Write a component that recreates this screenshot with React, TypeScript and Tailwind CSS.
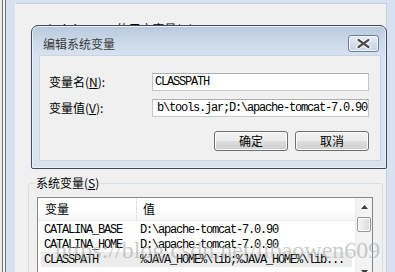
const cjk = "font-['Noto_Sans_CJK_SC',sans-serif]";
const mono = "font-['Liberation_Mono',monospace] text-[12px] tracking-[-1.2px]";

const rows = [
  { name: 'CATALINA_BASE', value: 'D:\\apache-tomcat-7.0.90', selected: false },
  { name: 'CATALINA_HOME', value: 'D:\\apache-tomcat-7.0.90', selected: false },
  { name: 'CLASSPATH', value: '%JAVA_HOME%\\lib;%JAVA_HOME%\\lib...', selected: true },
]

function WinButton({ label }: { label: string }) {
  return (
    <button className="w-[74px] h-[20px] rounded-[3px] border border-[#707070] bg-[linear-gradient(to_bottom,#f2f2f2,#ebebeb_50%,#dddddd_50%,#cfcfcf)] shadow-[inset_0_0_0_1px_#fbfbfb] text-[12px] leading-[14px] text-black flex items-center justify-center">
      {label}
    </button>
  )
}

export default function App() {
  return (
    <div className={`relative w-[395px] h-[272px] overflow-hidden bg-[#d6e2f0] flex text-black ${cjk}`}>
      {/* edge of the window behind */}
      <div className="w-[2px] bg-[#ececec]" />
      <div className="w-px bg-[#6f6f6f]" />
      <div className="w-[2px] bg-[#f7f7f7]" />
      <div className="w-px bg-[#6f6f6f]" />
      <div className="w-[9px]" />
      <div className="w-px mt-[3px] bg-[#eef3f9]" />

      {/* environment variables window client */}
      <div className="mt-[3px] w-[371px] bg-[#f0f0f0] border-t border-r border-[#c3cfdd] flex flex-col">
        <div className="mt-[18px] ml-[21px] text-[12px] leading-[14px] whitespace-nowrap">
          Administrator 的用户变量(<span className="underline">U</span>)
        </div>

        <div className="relative mt-[147px] ml-[12px] w-[355px] h-[120px] border border-[#d5dfe5] rounded-[3px] pt-[13px] pl-[8px]">
          <div className="absolute left-[6px] -top-[8px] px-[1px] bg-[#f0f0f0] text-[12px] leading-[14px]">
            系统变量(<span className="underline">S</span>)
          </div>

          <div className="w-[336px] h-[84px] border border-[#828790] bg-white flex">
            <div className="flex-1 flex flex-col">
              <div className="h-[23px] flex bg-[linear-gradient(to_bottom,#ffffff,#ffffff_50%,#f5f6f8)] border-b border-[#eaecef] text-[12px] leading-[14px]">
                <div className="w-[99px] pl-[7px] flex items-center border-r border-[#e2e4e8]">变量</div>
                <div className="pl-[6px] flex items-center">值</div>
              </div>
              <div className="pt-[1px] flex flex-col">
                {rows.map((r) => (
                  <div
                    key={r.name}
                    className={`mx-[3px] h-[15px] flex items-center whitespace-nowrap ${mono} ${r.selected ? 'bg-[#ececec]' : ''}`}
                  >
                    <div className="w-[96px] pl-[3px]">{r.name}</div>
                    <div className="pl-[3px]">{r.value}</div>
                  </div>
                ))}
              </div>
            </div>

            {/* scrollbar */}
            <div className="w-[17px] flex flex-col bg-[#f3f3f3] border-l border-[#ebebeb]">
              <div className="h-[17px] flex items-center justify-center">
                <svg width="7" height="4" viewBox="0 0 7 4">
                  <path d="M0 4 L3.5 0 L7 4 Z" fill="#3c3c3c" />
                </svg>
              </div>
              <div className="mt-[2px] mx-[1px] h-[15px] rounded-[2px] border border-[#979797] bg-[linear-gradient(to_right,#f3f3f3,#e8e8e8_50%,#d9d9d9)] shadow-[inset_0_0_0_1px_#fafafa]" />
              <div className="flex-1" />
              <div className="h-[17px] flex items-center justify-center">
                <svg width="7" height="4" viewBox="0 0 7 4">
                  <path d="M0 0 L7 0 L3.5 4 Z" fill="#3c3c3c" />
                </svg>
              </div>
            </div>
          </div>
        </div>
      </div>

      {/* watermark */}
      <div className="absolute left-[55px] top-[238px] text-[24px] leading-[24px] font-['Liberation_Serif',serif] text-[#a9a9a9]/60 whitespace-nowrap">
        https://blog.csdn.net/libaowen609
      </div>

      {/* edit system variable dialog */}
      <div className="absolute left-[31px] top-[25px] w-[356px] h-[144px] rounded-t-[7px] rounded-b-[2px] border border-[#434b57] bg-[linear-gradient(to_bottom,#b8c8dc,#c9d7e7_14px,#d7e3f1_30px,#d7e3f1)] shadow-[inset_0_0_0_1px_#e9f0f8] flex flex-col">
        <div className="h-[29px] flex justify-between items-start">
          <span className="mt-[11px] ml-[11px] text-[12px] leading-[14px] text-[#3a3a3a]">编辑系统变量</span>
          <div className="mt-[9px] mr-[7px] w-[31px] h-[17px] rounded-[3px] border border-[#6f7e92] bg-[linear-gradient(to_bottom,#e6ecf4,#d4deea_50%,#c6d3e3)] shadow-[inset_0_0_0_1px_#f1f5fa] flex items-center justify-center">
            <svg width="15" height="11" viewBox="0 0 15 11">
              <path d="M2.5 2 L12.5 9 M12.5 2 L2.5 9" stroke="#ffffff" strokeWidth="4.5" strokeLinecap="round" />
              <path d="M2.5 2 L12.5 9 M12.5 2 L2.5 9" stroke="#4d4d4d" strokeWidth="2.2" strokeLinecap="round" />
            </svg>
          </div>
        </div>

        <div className="ml-[7px] mr-[5px] h-[106px] bg-[#f0f0f0] border border-[#c9d5e3] pt-[17px] pl-[9px] pr-[11px] flex flex-col">
          <div className="flex items-center">
            <span className="w-[103px] text-[12px] leading-[14px]">
              变量名(<span className="underline">N</span>):
            </span>
            <div className={`w-[217px] h-[18px] bg-white border border-[#c2c6cd] border-t-[#abadb3] flex items-center pl-[2px] whitespace-nowrap ${mono}`}>
              CLASSPATH
            </div>
          </div>
          <div className="mt-[8px] flex items-center">
            <span className="w-[103px] text-[12px] leading-[14px]">
              变量值(<span className="underline">V</span>):
            </span>
            <div className={`w-[217px] h-[18px] bg-white border border-[#c2c6cd] border-t-[#abadb3] flex items-center justify-end pr-[1px] overflow-hidden whitespace-nowrap ${mono}`}>
              b\tools.jar;D:\apache-tomcat-7.0.90
            </div>
          </div>
          <div className="mt-[14px] flex justify-end gap-[7px]">
            <WinButton label="确定" />
            <WinButton label="取消" />
          </div>
        </div>
      </div>
    </div>
  )
}
